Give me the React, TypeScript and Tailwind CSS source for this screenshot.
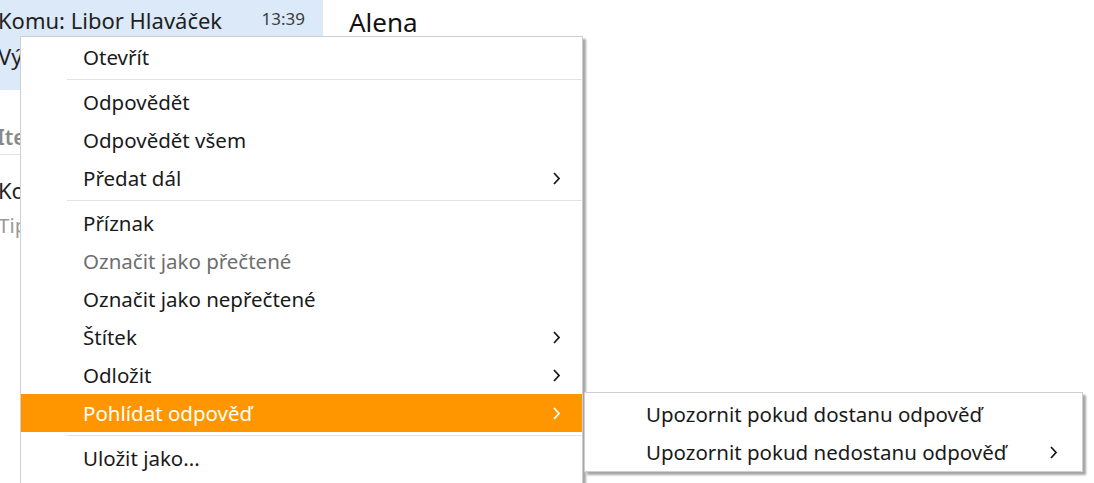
import { ReactNode } from "react";

type Item = { label: string; sub?: boolean; disabled?: boolean; active?: boolean };

const GROUPS: Item[][] = [
	[{ label: "Otevřít" }],
	[{ label: "Odpovědět" }, { label: "Odpovědět všem" }, { label: "Předat dál", sub: true }],
	[
		{ label: "Příznak" },
		{ label: "Označit jako přečtené", disabled: true },
		{ label: "Označit jako nepřečtené" },
		{ label: "Štítek", sub: true },
		{ label: "Odložit", sub: true },
		{ label: "Pohlídat odpověď", sub: true, active: true },
	],
	[{ label: "Uložit jako..." }],
];

function Chevron({ color = "#1a1a1a" }: { color?: string }) {
	return (
		<svg aria-hidden="true" width="9" height="15" viewBox="0 0 9 15" fill="none">
			<path d="M2 2L7 7.5L2 13" stroke={color} strokeWidth="1.8" />
		</svg>
	);
}

function Row({ item, pad, arrowRight }: { item: Item; pad: string; arrowRight: string }) {
	return (
		<div
			className={`flex h-[38px] items-center justify-between ${pad} ${arrowRight} ${
				item.active ? "bg-[#ff9600] text-white" : item.disabled ? "text-[#6e6e6e]" : "text-[#1a1a1a]"
			}`}
		>
			<span>{item.label}</span>
			{item.sub && <Chevron color={item.active ? "#ffffff" : "#1a1a1a"} />}
		</div>
	);
}

function Separator({ left }: { left: string }) {
	return (
		<div className={`flex h-[7px] items-center ${left}`}>
			<div className="h-px w-full bg-[#e3e3e3]" />
		</div>
	);
}

function Panel({ children, className }: { children: ReactNode; className: string }) {
	return (
		<div
			className={`absolute border border-[#cfcfcf] bg-white shadow-[3px_3px_2px_rgba(0,0,0,0.35)] ${className}`}
		>
			{children}
		</div>
	);
}

export default function App() {
	return (
		<div
			className="relative h-[483px] w-[1094px] overflow-hidden bg-white text-[20.5px] leading-none"
			style={{ fontFamily: '"Noto Sans", "Open Sans", sans-serif' }}
		>
			<div className="flex h-full">
				<div className="w-[323px] shrink-0 border-r border-[#e6e6e6]">
					<div className="h-[90px] bg-[#dce9f9]">
						<div className="-ml-[2px] flex items-start justify-between pr-[17px] pt-[9px]">
							<span className="text-[22px] text-[#1f1f1f]">Komu: Libor Hlaváček</span>
							<span className="pt-[1px] text-[17px] text-[#3d3d3d]">13:39</span>
						</div>
						<div className="-ml-[2px] pt-[14px] text-[22px] text-[#1f1f1f]">Výsledky testů</div>
					</div>
					<div className="-ml-[3px] border-b border-[#e3e3e3] pb-[6px] pt-[37px] text-[21px] font-semibold text-[#8a8a8a]">
						Itemy
					</div>
					<div className="-ml-[2px] pt-[24px] text-[22px] text-[#1f1f1f]">Kontrola</div>
					<div className="-ml-[2px] pt-[14px] text-[#9a9a9a]">Tipy</div>
				</div>
				<div className="pl-[26px] pt-[9px] text-[26px] text-[#111]">Alena</div>
			</div>

			<Panel className="left-[20px] top-[36px] w-[563px] pb-[20px] pt-[1px]">
				{GROUPS.map((group, gi) => (
					<div key={gi}>
						{gi > 0 && <Separator left="pl-[46px]" />}
						{group.map((item) => (
							<Row key={item.label} item={item} pad="pl-[62px]" arrowRight="pr-[21px]" />
						))}
					</div>
				))}
			</Panel>

			<Panel className="left-[584px] top-[392px] w-[499px] pt-[2px]">
				<Row item={{ label: "Upozornit pokud dostanu odpověď" }} pad="pl-[61px]" arrowRight="pr-[24px]" />
				<Row
					item={{ label: "Upozornit pokud nedostanu odpověď", sub: true }}
					pad="pl-[61px]"
					arrowRight="pr-[24px]"
				/>
			</Panel>
		</div>
	);
}
